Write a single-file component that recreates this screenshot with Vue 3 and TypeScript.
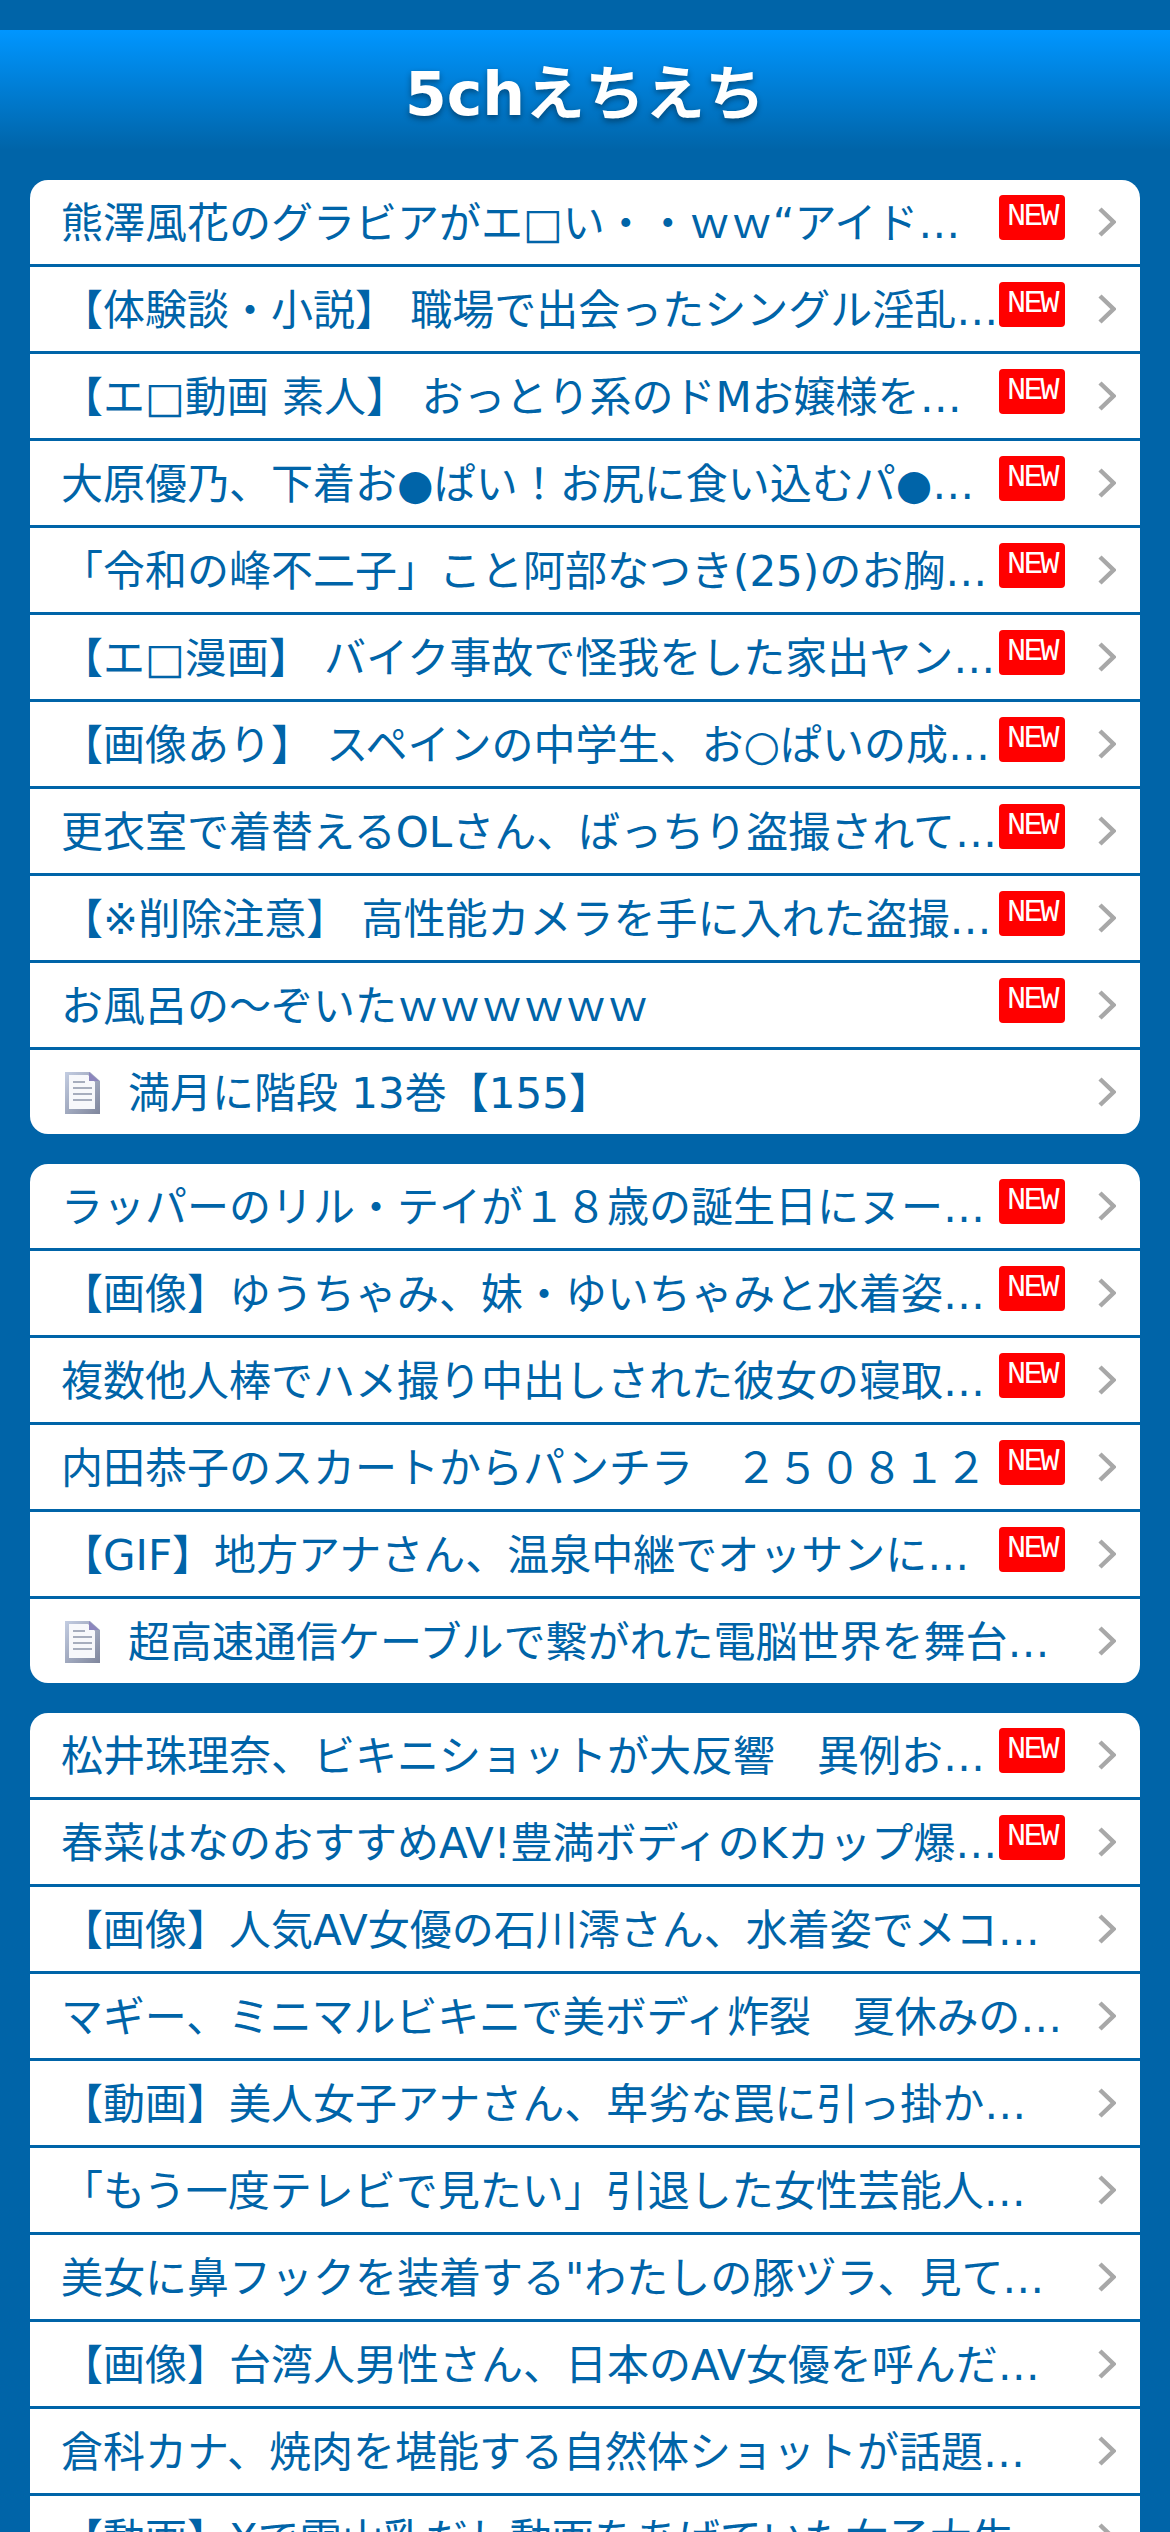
<script setup lang="ts">
interface Row {
  title: string
  isNew?: boolean
  doc?: boolean
  tight?: boolean
}

const groups: Row[][] = [
  [
    { title: '熊澤風花のグラビアがエ□い・・ｗｗ“アイドルの域を超えている”と話題に', isNew: true },
    { title: '【体験談・小説】 職場で出会ったシングル淫乱熟女との関係について', isNew: true },
    { title: '【エ□動画 素人】 おっとり系のドMお嬢様を調教してみた結果について', isNew: true },
    { title: '大原優乃、下着お●ぱい！お尻に食い込むパ●ティーがヤバすぎる', isNew: true },
    { title: '「令和の峰不二子」こと阿部なつき(25)のお胸がすごいことになっている', isNew: true },
    { title: '【エ□漫画】 バイク事故で怪我をした家出ヤンキー娘を助けた結果', isNew: true },
    { title: '【画像あり】 スペインの中学生、お○ぱいの成長がすごすぎると話題に', isNew: true },
    { title: '更衣室で着替えるOLさん、ばっちり盗撮されてしまう事案が発生', isNew: true },
    { title: '【※削除注意】 高性能カメラを手に入れた盗撮犯の映像がヤバすぎる', isNew: true },
    { title: 'お風呂の～ぞいたｗｗｗｗｗｗ', isNew: true },
    { title: '満月に階段 13巻【155】', doc: true },
  ],
  [
    { title: 'ラッパーのリル・テイが１８歳の誕生日にヌード写真を公開して話題に', isNew: true },
    { title: '【画像】ゆうちゃみ、妹・ゆいちゃみと水着姿を披露して話題に', isNew: true },
    { title: '複数他人棒でハメ撮り中出しされた彼女の寝取られ動画を見た結果', isNew: true },
    { title: '内田恭子のスカートからパンチラ　２５０８１２', isNew: true },
    { title: '【GIF】地方アナさん、温泉中継でオッサンに囲まれてしまう', isNew: true },
    { title: '超高速通信ケーブルで繋がれた電脳世界を舞台にした物語が話題に', doc: true },
  ],
  [
    { title: '松井珠理奈、ビキニショットが大反響　異例お尻アピールが話題に', isNew: true },
    { title: '春菜はなのおすすめAV!豊満ボディのKカップ爆乳が堪能できる作品', isNew: true },
    { title: '【画像】人気AV女優の石川澪さん、水着姿でメコスジが見えてしまう' },
    { title: 'マギー、ミニマルビキニで美ボディ炸裂　夏休みの思い出を公開して話題に', tight: true },
    { title: '【動画】美人女子アナさん、卑劣な罠に引っ掛かってしまう放送事故' },
    { title: '「もう一度テレビで見たい」引退した女性芸能人ランキングが話題に' },
    { title: '美女に鼻フックを装着する"わたしの豚ヅラ、見てください"な動画' },
    { title: '【画像】台湾人男性さん、日本のAV女優を呼んだ結果がヤバすぎる' },
    { title: '倉科カナ、焼肉を堪能する自然体ショットが話題になっている模様' },
    { title: '【動画】Xで雪山乳だし動画をあげていた女子大生、特定されてしまう' },
  ],
]
</script>

<template>
  <div class="page">
    <header class="site-header">
      <h1>5chえちえち</h1>
    </header>

    <main class="lists">
      <ul v-for="(rows, i) in groups" :key="i" class="card">
        <li v-for="row in rows" :key="row.title" class="row">
          <svg v-if="row.doc" class="doc" viewBox="0 0 35 43">
            <defs>
              <linearGradient id="docEdge" x1="0" y1="0" x2="1" y2="1">
                <stop offset="0" stop-color="#c3cde2" />
                <stop offset="1" stop-color="#7f869c" />
              </linearGradient>
            </defs>
            <path d="M0 1H25L35 10V43H0Z" fill="url(#docEdge)" />
            <path d="M4 4H23L30 11V38H4Z" fill="#f7f8fb" />
            <path d="M24 1L34 10H24Z" fill="#8c86bd" />
            <path d="M8 11H20M8 17H27M8 23H27M8 29H27" stroke="#a6adbd" stroke-width="2" />
          </svg>
          <span class="title" :class="{ tight: row.tight }">{{ row.title }}</span>
          <span v-if="row.isNew" class="new">NEW</span>
          <svg class="chevron" viewBox="0 0 18 30">
            <path d="M2 2L15.5 15L2 28" fill="none" stroke="#a8a8a8" stroke-width="4.5" />
          </svg>
        </li>
      </ul>
    </main>
  </div>
</template>

<style>
body {
  background: #0064a8;
}
</style>

<style scoped>
.page {
  height: 2532px;
  overflow: hidden;
  padding-top: 30px;
  background: #0064a8;
  box-sizing: border-box;
  font-family: "DejaVu Sans", "Noto Sans CJK JP", sans-serif;
}

.site-header {
  height: 120px;
  padding-bottom: 3px;
  box-sizing: border-box;
  background: linear-gradient(#0096ff, #0064a8);
  display: flex;
  align-items: center;
  justify-content: center;
}

.site-header h1 {
  margin: 0;
  color: #fff;
  font-size: 60px;
  font-weight: bold;
  text-shadow: 0 3px 6px rgba(0, 0, 0, 0.4);
}

.lists {
  padding: 30px 30px 0;
  display: flex;
  flex-direction: column;
  gap: 30px;
}

.card {
  list-style: none;
  margin: 0;
  padding: 0;
  background: #0064a8;
  border-radius: 18px;
  overflow: hidden;
}

.row {
  height: 84px;
  display: flex;
  align-items: center;
  padding: 0 24px 0 31px;
  background: #fff;
}

.row + .row {
  margin-top: 3px;
}

.title {
  flex: 1;
  min-width: 0;
  padding-bottom: 6px;
  color: #0064a8;
  font-size: 42px;
  white-space: nowrap;
  overflow: hidden;
  text-overflow: ellipsis;
}

.tight {
  letter-spacing: -0.15px;
}

.doc {
  width: 35px;
  height: 43px;
  margin: 0 28px 0 4px;
  flex: none;
}

.new {
  flex: none;
  align-self: flex-start;
  width: 66px;
  height: 45px;
  margin-top: 15px;
  border-radius: 4px;
  background: #ff0000;
  color: #fff;
  font: 32px/44px "Liberation Mono", monospace;
  letter-spacing: -2.5px;
  text-align: center;
}

.chevron {
  flex: none;
  width: 18px;
  height: 30px;
  margin-left: 33px;
}
</style>
